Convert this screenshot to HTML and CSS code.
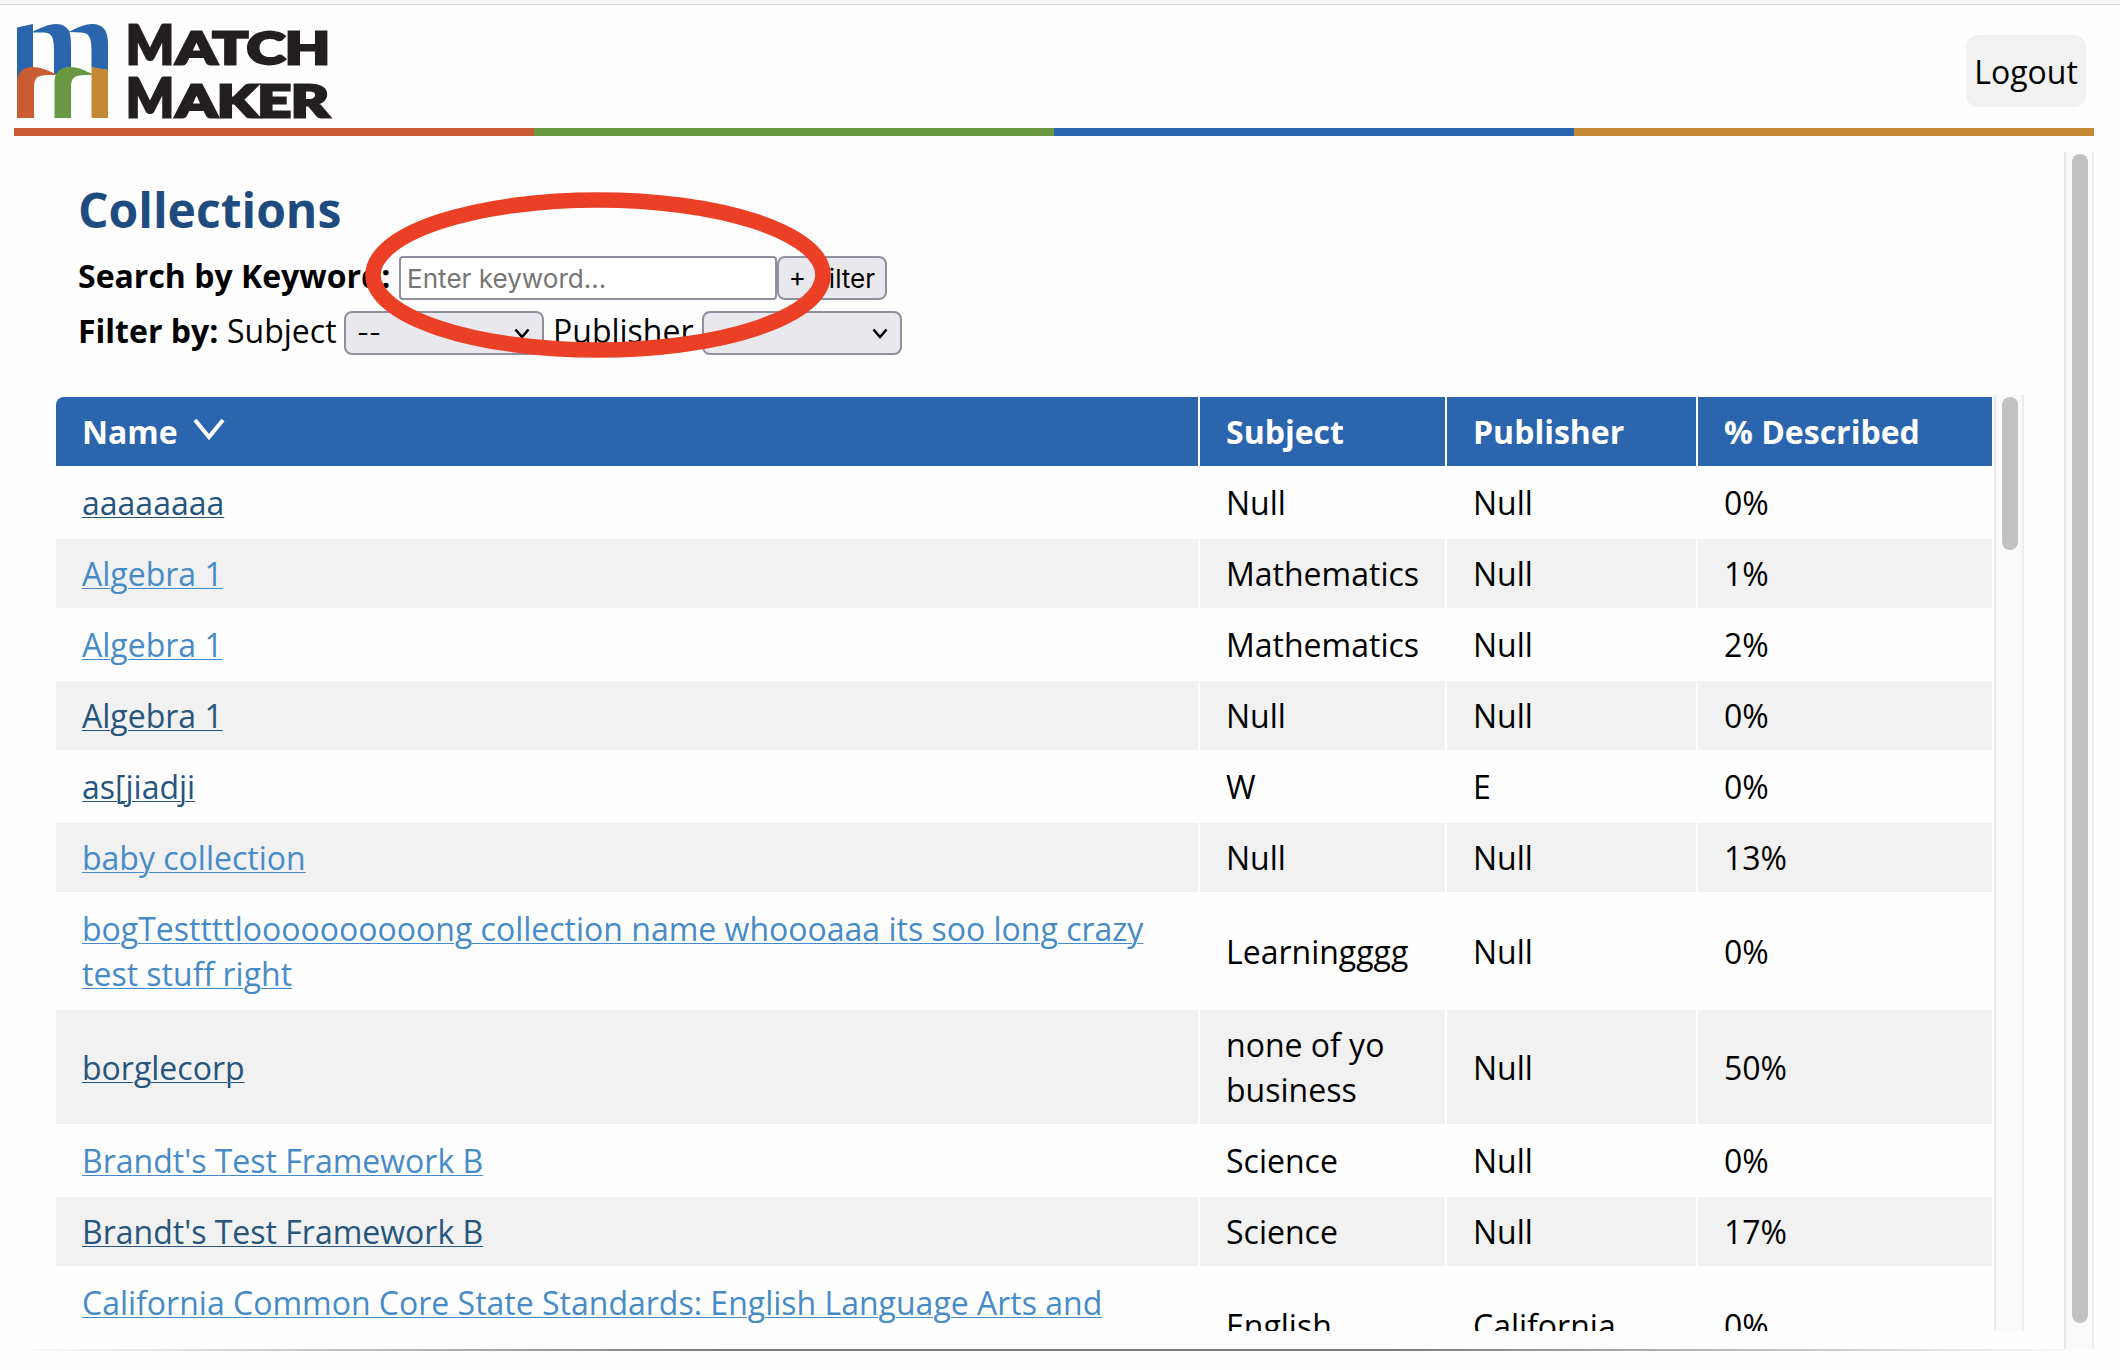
FILE: index.html
```html
<!DOCTYPE html>
<html lang="en">
<head>
<meta charset="utf-8">
<title>Match Maker</title>
<link rel="stylesheet" href="styles.css">
</head>
<body>
<div class="chrome-edge"></div>
<div class="app">
  <header class="header">
    <svg class="logo" width="330" height="104" viewBox="0 0 330 104" role="img" aria-label="Match Maker">
      <path fill="#2b65ad" d="M3 7.500 L19 4 V11.500 C26 8.500 34 4 42 4 C49 4 53 7.500 55.500 11.500 C63 8 70 4 78 4 C89 4 94 10.500 94 23 V50 L77.500 47.500 V30 C77.500 16 74 12.500 66 12.500 L55.500 12 C56.500 16 57 20 57 26 V47 C50 47 46 50 42 55 L40 54 V30 C40 16 37 12.500 29 12.500 L19 12.500 V48 C10 49 5 54 3 68 Z"/>
      <path fill="#c95c31" d="M3 98 V62 C3 53 9 47 19 47 C26 47 33 50 42 54 L41 55 H34 C23 55 20 58 20 68 V98 Z"/>
      <path fill="#6a9842" d="M40.500 98 V62 C40.500 53 46 47 56 47 C64 47 70 50 78 54 L77.500 55 H71 C60 55 57 58 57 68 V98 Z"/>
      <path fill="#c58933" d="M77.500 47 L94 50 V98 H77.500 Z"/>
      <g class="logo-text">
        <text class="logo-cap" x="112" y="44" textLength="48" lengthAdjust="spacingAndGlyphs">M</text>
        <text class="logo-small" x="162" y="44" textLength="154" lengthAdjust="spacingAndGlyphs">ATCH</text>
        <text class="logo-cap" x="112" y="97" textLength="48" lengthAdjust="spacingAndGlyphs">M</text>
        <text class="logo-small" x="162" y="97" textLength="153" lengthAdjust="spacingAndGlyphs">AKER</text>
      </g>
    </svg>
    <button class="logout">Logout</button>
  </header>
  <div class="stripes"><i class="orange"></i><i class="green"></i><i class="blue"></i><i class="gold"></i></div>
  <div class="body">
    <main class="main">
      <h1 class="title">Collections</h1>
      <div class="line">
        <label class="bold search-label">Search by Keyword:</label>
        <div class="input">Enter keyword...</div>
        <button class="filter">+ Filter</button>
      </div>
      <div class="line">
        <span class="bold">Filter by:</span>
        <span class="subject-label">Subject</span>
        <div class="select">--<svg width="16" height="11" viewBox="0 0 16 11"><path d="M1.500 1.500 L8 9 L14.500 1.500"/></svg></div>
        <span class="publisher-label">Publisher</span>
        <div class="select"><span></span><svg width="16" height="11" viewBox="0 0 16 11"><path d="M1.500 1.500 L8 9 L14.500 1.500"/></svg></div>
      </div>
      <div class="table-wrap">
        <div class="table">
          <div class="row head"><div>Name<svg class="sort" width="32" height="22" viewBox="0 0 32 22"><path d="M2 1 L16 18 L30 1"/></svg></div><div>Subject</div><div>Publisher</div><div>% Described</div></div>
          <div class="row"><div><a class="dark">aaaaaaaa</a></div><div>Null</div><div>Null</div><div>0%</div></div>
          <div class="row"><div><a>Algebra 1</a></div><div>Mathematics</div><div>Null</div><div>1%</div></div>
          <div class="row"><div><a>Algebra 1</a></div><div>Mathematics</div><div>Null</div><div>2%</div></div>
          <div class="row"><div><a class="dark">Algebra 1</a></div><div>Null</div><div>Null</div><div>0%</div></div>
          <div class="row"><div><a class="dark">as[jiadji</a></div><div>W</div><div>E</div><div>0%</div></div>
          <div class="row"><div><a>baby collection</a></div><div>Null</div><div>Null</div><div>13%</div></div>
          <div class="row"><div><a>bogTesttttloooooooooong collection name whoooaaa its soo long crazy<br>test stuff right</a></div><div>Learningggg</div><div>Null</div><div>0%</div></div>
          <div class="row"><div><a class="dark">borglecorp</a></div><div>none of yo<br>business</div><div>Null</div><div>50%</div></div>
          <div class="row"><div><a>Brandt's Test Framework B</a></div><div>Science</div><div>Null</div><div>0%</div></div>
          <div class="row"><div><a class="dark">Brandt's Test Framework B</a></div><div>Science</div><div>Null</div><div>17%</div></div>
          <div class="row last"><div><a>California Common Core State Standards: English Language Arts and</a></div><div>English</div><div>California</div><div>0%</div></div>
        </div>
        <div class="scroll inner"><div class="thumb"></div></div>
      </div>
    </main>
    <div class="scroll outer"><div class="thumb"></div></div>
  </div>
  <div class="bottom-rule"></div>
</div>
<svg class="highlight" width="470" height="170" viewBox="0 0 470 170"><ellipse cx="235" cy="85" rx="225" ry="75"/></svg>
</body>
</html>
```
FILE: styles.css
```css
* { box-sizing: border-box; }
body {
  margin: 0;
  width: 2120px;
  height: 1370px;
  overflow: hidden;
  background: #fefefe;
  color: #000;
  font: 32px/45px "Open Sans", "Noto Sans", sans-serif;
}
.chrome-edge { height: 5px; background: #f5f5f7; border-bottom: 1px solid #d6d6d8; }
.app { width: 2080px; margin-left: 14px; }
.header { height: 123px; display: flex; justify-content: space-between; padding: 15px 8px 0 0; }
.logo { display: block; overflow: visible; }
.logo-text { font-family: Lato, sans-serif; font-weight: 900; fill: #231f20; stroke: #231f20; stroke-width: 2.8px; }
.logo-cap { font-size: 53.5px; }
.logo-small { font-size: 44.5px; }
.logout {
  width: 120px; height: 72px; margin-top: 15px; padding: 0;
  border: 0; border-radius: 12px; background: #f1f1f1; color: #000; font: inherit;
}
.stripes { display: flex; height: 8px; }
.stripes i { flex: 1; }
.orange { background: #c95c31; }
.green { background: #6a9842; }
.blue { background: #2b65ad; }
.gold { background: #c58933; }
.body { display: flex; height: 1197px; margin-top: 16px; }
.main { width: 2050px; padding: 25px 0 0 42px; }
.title { margin: 0 0 7px 22px; font-size: 48px; line-height: 66px; font-weight: 700; color: #1f4c80; }
.line { display: flex; align-items: center; height: 55px; margin-left: 22px; white-space: nowrap; }
.line > span, .search-label { position: relative; top: -2px; }
.bold { font-weight: 700; }
.search-label { width: 321px; }
.input, .filter, .select {
  height: 44px; border: 2px solid #8f8f9d; font: 26.1px/40px Inter, sans-serif; color: #000;
}
.input { width: 378px; padding: 1px 0 0 6px; line-height: 39px; border-radius: 4px; background: #fff; color: #757575; }
.filter { width: 110px; padding: 1px 0 0; line-height: 39px; border-radius: 8px; background: #e9e9ed; }
.subject-label { margin-left: 9px; width: 117px; }
.line > .bold:not(.search-label) { width: 140px; }
.select { width: 200px; padding: 1px 12px 0 11px; border-radius: 8px; background: #e9e9ed; display: flex; align-items: center; justify-content: space-between; }
.select svg { fill: none; stroke: #000; stroke-width: 2.6; }
.publisher-label { margin-left: 9px; width: 149px; }
.table-wrap { display: flex; height: 936px; margin-top: 35px; }
.table { width: 1936px; margin: 2px 2px 0 0; overflow: hidden; display: flex; flex-direction: column; gap: 2px; border-top-left-radius: 8px; }
.row { display: grid; grid-template-columns: 1142px 245px 249px 294px; gap: 2px; min-height: 69px; flex: none; }
.row > div { display: flex; align-items: center; padding: 12px 0 12px 26px; white-space: nowrap; }
.row:nth-child(odd) > div { background: #f1f1f1; }
.row.head > div { background: #2b65ad; color: #fff; font-weight: 700; }
.row.last { height: 114px; }
.row.last > div { background: none; }
.row.last > div:first-child { align-items: flex-start; }
.sort { margin: -4px 0 0 15px; fill: none; stroke: #fff; stroke-width: 4; }
a { color: #468bc8; text-decoration: underline; text-decoration-thickness: 1px; text-underline-offset: 2px; }
.dark { color: #26557d; }
.scroll { width: 30px; background: #fafafa; border-left: 2px solid #e8e8e8; border-right: 2px solid #ededed; padding: 2px 0 0 6px; }
.thumb { width: 16px; border-radius: 8px; background: #c1c1c1; }
.inner .thumb { height: 153px; }
.outer .thumb { height: 1169px; }
.bottom-rule { height: 2px; background: linear-gradient(90deg, transparent, #7b7b7b 34%, #7b7b7b 66%, transparent); }
.highlight { position: absolute; left: 363px; top: 190px; fill: none; stroke: #eb4026; stroke-width: 15.500px; }
```
